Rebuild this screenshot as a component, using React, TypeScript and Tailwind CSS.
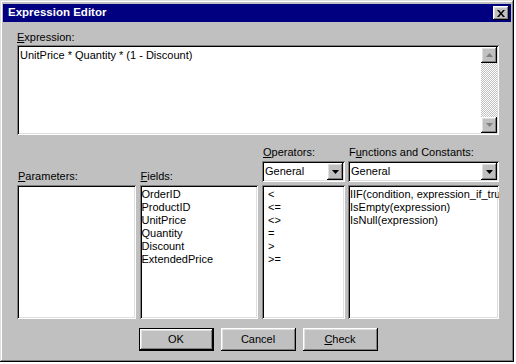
import React from "react";

const font = { fontFamily: '"Liberation Sans", Arial, sans-serif' };

const sunken =
  "shadow-[inset_1px_1px_0_#808080,inset_-1px_-1px_0_#ffffff,inset_2px_2px_0_#000000,inset_-2px_-2px_0_#dfdfdf]";
const raised =
  "shadow-[inset_-1px_-1px_0_#000000,inset_1px_1px_0_#ffffff,inset_-2px_-2px_0_#808080,inset_2px_2px_0_#dfdfdf]";

function U({ children }: { children: React.ReactNode }) {
  return <span className="underline underline-offset-[1px]">{children}</span>;
}

function Arrow({ dir, color }: { dir: "up" | "down"; color: string }) {
  return (
    <svg width="7" height="4" viewBox="0 0 7 4">
      {dir === "up" ? (
        <path d="M3.5 0 L7 4 L0 4 Z" fill={color} />
      ) : (
        <path d="M0 0 L7 0 L3.5 4 Z" fill={color} />
      )}
    </svg>
  );
}

function Combo({ width }: { width: string }) {
  return (
    <div className={`${width} h-[21px] bg-white ${sunken} flex items-center p-[2px]`}>
      <span className="flex-1 pl-[1px] leading-[13px]">General</span>
      <div className={`w-[16px] h-[17px] bg-[#c0c0c0] ${raised} flex items-center justify-center`}>
        <Arrow dir="down" color="#000" />
      </div>
    </div>
  );
}

function Btn({ label, main }: { label: React.ReactNode; main?: boolean }) {
  if (main)
    return (
      <div className="w-[75px] h-[23px] border border-black">
        <div className={`w-full h-full bg-[#c0c0c0] ${raised} flex items-center justify-center`}>{label}</div>
      </div>
    );
  return (
    <div className={`w-[75px] h-[23px] bg-[#c0c0c0] ${raised} flex items-center justify-center`}>{label}</div>
  );
}

export default function App() {
  const fields = ["OrderID", "ProductID", "UnitPrice", "Quantity", "Discount", "ExtendedPrice"];
  const ops = ["<", "<=", "<>", "=", ">", ">="];
  const funcs = ["IIF(condition, expression_if_true, expression_if_false)", "IsEmpty(expression)", "IsNull(expression)"];

  return (
    <div className="w-[516px] h-[364px] bg-white text-[11px] text-black" style={font}>
      <div
        className={`w-[514px] h-[362px] bg-[#c0c0c0] pt-[4px] px-[3px] flex flex-col shadow-[inset_-1px_-1px_0_#000000,inset_1px_1px_0_#dfdfdf,inset_-2px_-2px_0_#808080,inset_2px_2px_0_#ffffff]`}
      >
        {/* title bar */}
        <div className="h-[18px] bg-[#000080] flex items-center justify-between pl-[5px] pr-[2px]">
          <span className="text-white font-bold text-[11.5px]">Expression Editor</span>
          <div className={`w-[16px] h-[14px] bg-[#c0c0c0] ${raised} flex items-center justify-center`}>
            <svg width="8" height="7" viewBox="0 0 8 7">
              <path d="M0 0 L2 0 L4 2.5 L6 0 L8 0 L5 3.5 L8 7 L6 7 L4 4.5 L2 7 L0 7 L3 3.5 Z" fill="#000" />
            </svg>
          </div>
        </div>

        <div className="ml-[14px] w-[482px] flex flex-col">
          <div className="mt-[9px] h-[13px] leading-[13px]">
            <U>E</U>xpression:
          </div>
          <div className={`mt-[1px] h-[90px] bg-white ${sunken} p-[2px] flex`}>
            <div className="flex-1 pt-[2px] pl-[1px] leading-[13px]">UnitPrice * Quantity * (1 - Discount)</div>
            <div className="w-[16px] flex flex-col bg-[repeating-conic-gradient(#c0c0c0_0%_25%,#ffffff_0%_50%)] bg-[length:2px_2px]">
              <div className={`h-[16px] bg-[#c0c0c0] ${raised} flex items-center justify-center`}>
                <Arrow dir="up" color="#808080" />
              </div>
              <div className="flex-1" />
              <div className={`h-[16px] bg-[#c0c0c0] ${raised} flex items-center justify-center`}>
                <Arrow dir="down" color="#808080" />
              </div>
            </div>
          </div>

          <div className="mt-[11px] flex items-end gap-[4px]">
            <div className="w-[120px] flex flex-col">
              <div className="h-[13px] leading-[13px] pl-[1px]">
                <U>P</U>arameters:
              </div>
              <div className={`mt-[2px] h-[134px] bg-white ${sunken}`} />
            </div>
            <div className="w-[120px] flex flex-col">
              <div className="h-[13px] leading-[13px] pl-[1px]">
                <U>F</U>ields:
              </div>
              <div className={`mt-[2px] h-[134px] bg-white ${sunken} p-[2px] pt-[3px]`}>
                {fields.map((f) => (
                  <div key={f} className="h-[13px] leading-[13px]">
                    {f}
                  </div>
                ))}
              </div>
            </div>
            <div className="w-[83px] flex flex-col">
              <div className="h-[13px] leading-[13px] pl-[1px]">
                <U>O</U>perators:
              </div>
              <div className="mt-[2px]">
                <Combo width="w-[83px]" />
              </div>
              <div className={`mt-[3px] h-[134px] bg-white ${sunken} p-[2px] pt-[3px] pl-[6px]`}>
                {ops.map((o) => (
                  <div key={o} className="h-[13px] leading-[13px]">
                    {o}
                  </div>
                ))}
              </div>
            </div>
            <div className="w-[151px] flex flex-col ml-[-1px]">
              <div className="h-[13px] leading-[13px] pl-[1px]">
                F<U>u</U>nctions and Constants:
              </div>
              <div className="mt-[2px]">
                <Combo width="w-[151px]" />
              </div>
              <div className={`mt-[3px] h-[134px] bg-white ${sunken} p-[2px] pt-[3px] overflow-hidden`}>
                {funcs.map((f) => (
                  <div key={f} className="h-[13px] leading-[13px] whitespace-nowrap">
                    {f}
                  </div>
                ))}
              </div>
            </div>
          </div>
        </div>

        <div className="mt-[9px] flex justify-center gap-[7px] pl-[2px]">
          <Btn label="OK" main />
          <Btn label="Cancel" />
          <Btn
            label={
              <span>
                <U>C</U>heck
              </span>
            }
          />
        </div>
      </div>
    </div>
  );
}
